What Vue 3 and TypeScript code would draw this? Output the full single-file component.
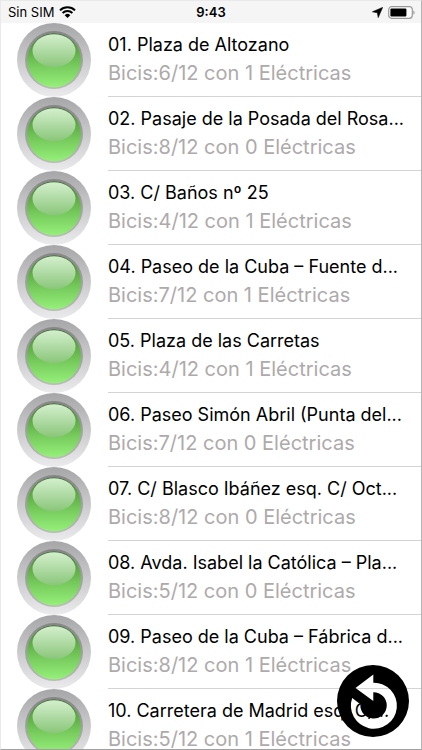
<script setup lang="ts">
interface Station {
  name: string
  bikes: number
  docks: number
  electric: number
}

const stations: Station[] = [
  { name: '01. Plaza de Altozano', bikes: 6, docks: 12, electric: 1 },
  { name: '02. Pasaje de la Posada del Rosa...', bikes: 8, docks: 12, electric: 0 },
  { name: '03. C/ Baños nº 25', bikes: 4, docks: 12, electric: 1 },
  { name: '04. Paseo de la Cuba – Fuente d...', bikes: 7, docks: 12, electric: 1 },
  { name: '05. Plaza de las Carretas', bikes: 4, docks: 12, electric: 1 },
  { name: '06. Paseo Simón Abril (Punta del...', bikes: 7, docks: 12, electric: 0 },
  { name: '07. C/ Blasco Ibáñez esq. C/ Oct...', bikes: 8, docks: 12, electric: 0 },
  { name: '08. Avda. Isabel la Católica – Pla...', bikes: 5, docks: 12, electric: 0 },
  { name: '09. Paseo de la Cuba – Fábrica d...', bikes: 8, docks: 12, electric: 1 },
  { name: '10. Carretera de Madrid esq. C/...', bikes: 5, docks: 12, electric: 1 },
]
</script>

<template>
  <div class="screen">
    <header class="status">
      <div class="carrier">
        <span>Sin SIM</span>
        <svg class="wifi" viewBox="0 0 17 12" aria-hidden="true">
          <path d="M1 4.4a10.8 10.8 0 0 1 15 0M3.6 7a7.1 7.1 0 0 1 9.8 0" fill="none" stroke="#000" stroke-width="2" />
          <path d="M8.5 12L5.7 9.2a4 4 0 0 1 5.6 0z" />
        </svg>
      </div>
      <time class="clock">9:43</time>
      <div class="power">
        <svg class="arrow" viewBox="0 0 11 11" aria-hidden="true">
          <path d="M10.6.4L6.2 10.6 5.4 5.8.4 4.8z" stroke="#000" stroke-width=".6" stroke-linejoin="round" />
        </svg>
        <svg class="battery" viewBox="0 0 27 13" aria-hidden="true">
          <rect x=".7" y=".7" width="23.6" height="11.6" rx="3" fill="#fff" stroke="#999" stroke-width="1.2" />
          <rect x="2.4" y="2.4" width="16" height="8.2" rx="1" />
          <path d="M25.4 4.4c1.6.6 1.6 3.6 0 4.2z" fill="#999" />
        </svg>
      </div>
    </header>

    <svg class="defs" aria-hidden="true">
      <defs>
        <linearGradient id="rim" x1="0" y1="0" x2="0" y2="1">
          <stop offset="0" stop-color="#a6a6a8" />
          <stop offset=".5" stop-color="#cacacc" />
          <stop offset="1" stop-color="#ebebed" />
        </linearGradient>
        <linearGradient id="bezel" x1="0" y1="0" x2="0" y2="1">
          <stop offset="0" stop-color="#858585" />
          <stop offset="1" stop-color="#bcb8be" />
        </linearGradient>
        <linearGradient id="lamp" x1="0" y1="0" x2="0" y2="1">
          <stop offset="0" stop-color="#2f6423" />
          <stop offset=".25" stop-color="#57a33f" />
          <stop offset=".6" stop-color="#77cb5d" />
          <stop offset="1" stop-color="#96f07a" />
        </linearGradient>
        <linearGradient id="gloss" x1="0" y1="0" x2="0" y2="1">
          <stop offset="0" stop-color="#d4efcd" />
          <stop offset="1" stop-color="#8ac67a" />
        </linearGradient>
      </defs>
    </svg>

    <main>
      <ul class="list">
        <li v-for="station in stations" :key="station.name" class="row">
          <svg class="led" viewBox="0 0 74 74" aria-hidden="true">
            <circle cx="37" cy="37" r="37" fill="url(#rim)" />
            <circle cx="37" cy="37" r="29" fill="url(#bezel)" />
            <circle cx="37" cy="37.5" r="27" fill="url(#lamp)" />
            <ellipse cx="37" cy="27.7" rx="21.5" ry="16.5" fill="url(#gloss)" />
          </svg>
          <div class="info">
            <p class="name">{{ station.name }}</p>
            <p class="detail">Bicis:{{ station.bikes }}/{{ station.docks }} con {{ station.electric }} Eléctricas</p>
          </div>
        </li>
      </ul>
    </main>

    <button class="refresh" type="button" aria-label="Actualizar">
      <svg viewBox="0 0 72 72" aria-hidden="true">
        <path
          fill-rule="evenodd"
          d="M36 0a36 36 0 1 1 0 72a36 36 0 1 1 0-72zM36.300 9.500L18.500 23L36.300 36V27.200A13.200 13.200 0 1 1 23.400 39.300L15.200 33A23 23 0 1 0 36.300 17.700z"
        />
      </svg>
    </button>
  </div>
</template>

<style>
body {
  margin: 0;
  overflow: hidden;
}
</style>

<style scoped>
.screen {
  box-sizing: border-box;
  height: 100vh;
  overflow: hidden;
  position: relative;
  background: #fff;
  border: 1px solid #e9e9e9;
  border-right-color: #b4b4b4;
  border-bottom-color: #a0a0a0;
  font-family: Inter, "Liberation Sans", sans-serif;
  color: #000;
}

.status {
  display: grid;
  grid-template-columns: 1fr auto 1fr;
  align-items: center;
  height: 22px;
  padding: 0 6px;
  background: #f5f5f5;
  font-size: 13px;
}

.carrier,
.power {
  display: flex;
  align-items: center;
  gap: 5px;
}

.carrier {
  padding-left: 1px;
}

.power {
  justify-content: flex-end;
}

.clock {
  font-weight: 600;
}

.wifi {
  width: 17px;
  height: 12px;
}

.arrow {
  width: 11px;
  height: 11px;
}

.battery {
  width: 27px;
  height: 13px;
}

.defs {
  position: absolute;
  width: 0;
  height: 0;
}

.list {
  margin: 0;
  padding: 0 0 0 16px;
  list-style: none;
}

.row {
  display: flex;
  gap: 17px;
  height: 74px;
}

.led {
  flex: none;
  width: 74px;
  height: 74px;
}

.info {
  flex: 1;
  min-width: 0;
  box-sizing: border-box;
  padding-top: 8px;
  border-bottom: 1px solid #d4d4d4;
}

.name,
.detail {
  margin: 0;
  line-height: 28px;
  white-space: nowrap;
}

.name {
  font-size: 18px;
}

.detail {
  font-size: 20px;
  color: #aeaaab;
}

.refresh {
  position: absolute;
  right: 12px;
  bottom: 12px;
  width: 72px;
  height: 72px;
  padding: 0;
  border: 0;
  background: none;
}

.refresh svg {
  display: block;
  width: 100%;
  height: 100%;
}
</style>
